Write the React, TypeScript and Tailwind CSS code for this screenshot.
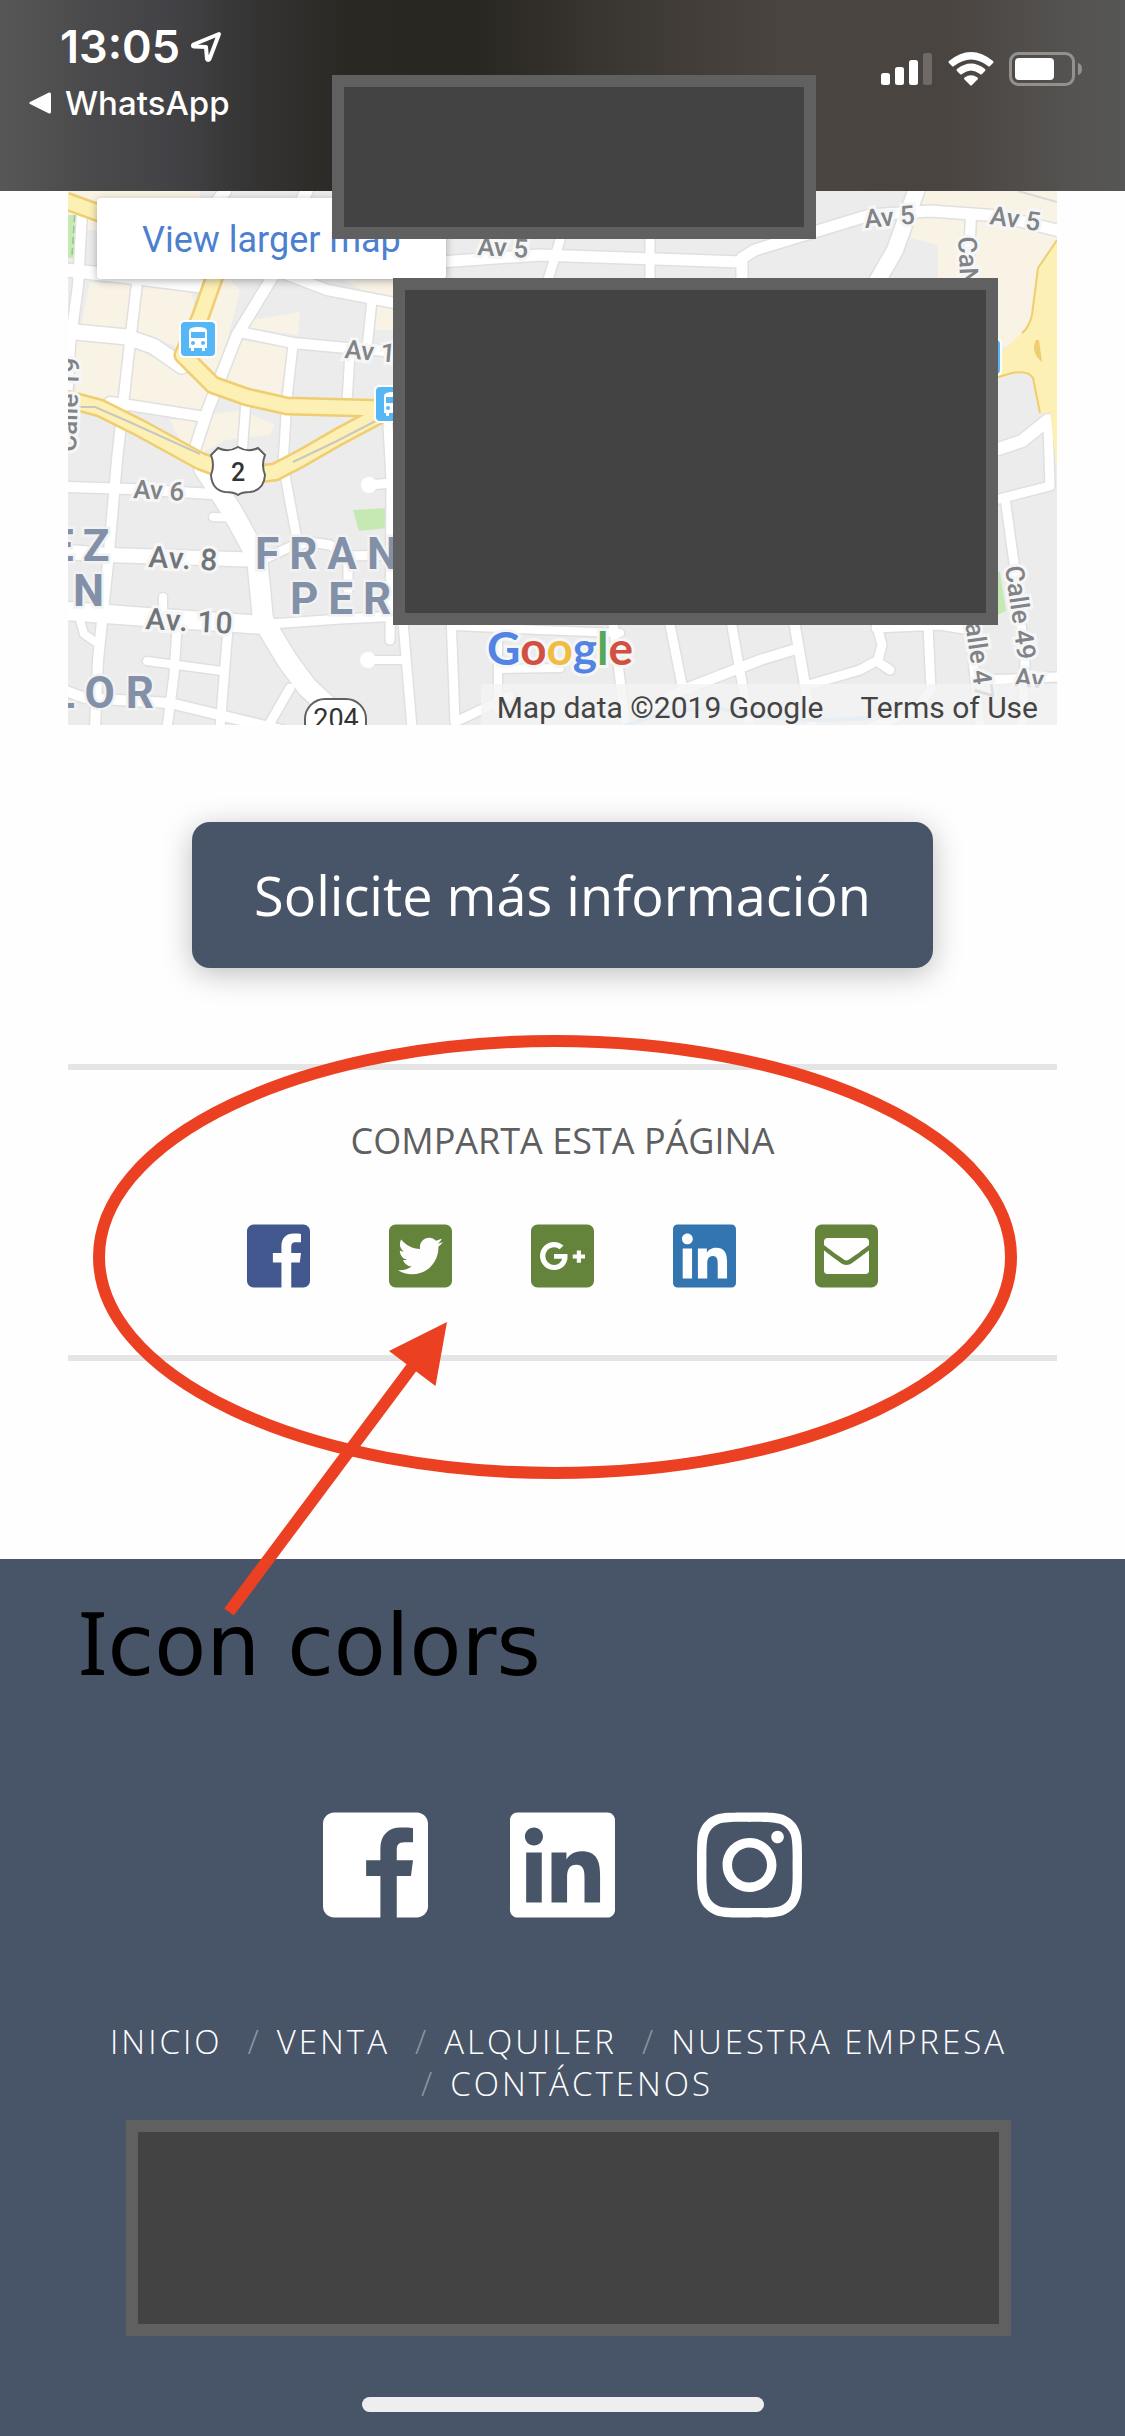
import React from "react";
import {
  FaTwitterSquare,
  FaGooglePlusSquare,
  FaLinkedin,
  FaEnvelopeSquare,
  FaInstagram,
} from "react-icons/fa";

function FacebookSquare({ className }: { className: string }) {
  return (
    <svg viewBox="0 0 448 512" className={className} fill="currentColor" aria-hidden="true">
      <path d="M448 80v352c0 26.5-21.5 48-48 48h-85.3V302.8h60.6l8.7-67.6h-69.3V192c0-19.6 5.4-32.9 33.5-32.9H384V98.7c-6.2-.8-27.4-2.7-52.2-2.7-51.6 0-87 31.5-87 89.4v49.9H184v67.6h60.9V480H48c-26.5 0-48-21.5-48-48V80c0-26.5 21.5-48 48-48h352c26.5 0 48 21.5 48 48z" />
    </svg>
  );
}

function StatusBar() {
  return (
    <header className="flex h-[191px] items-start justify-between bg-[linear-gradient(90deg,#575757_0%,#4a4a4c_8%,#434246_15%,#343332_23%,#292823_31%,#292722_42%,#3b3733_55%,#4b4541_70%,#4a4440_84%,#555452_96%,#575656_100%)] font-['Inter'] text-white">
      <div className="pt-[20px] pl-[29px]">
        <div className="flex items-center gap-[10px] pl-[31px]">
          <span className="text-[45px] leading-[54px] font-semibold">13:05</span>
          <svg width="32" height="32" viewBox="0 0 32 32" fill="none" aria-label="Ubicación">
            <path d="M29 3 L3.500 13.500 Q2 15 4 15.500 L16 16 L17 28 Q18 30 19.500 28 Z" stroke="white" strokeWidth="4" strokeLinejoin="round" />
          </svg>
        </div>
        <button className="mt-[9px] flex items-center gap-[14px] text-[33px] leading-[40px] font-medium">
          <svg width="22" height="22" viewBox="0 0 22 22" fill="white" aria-hidden="true">
            <path d="M20 0.500 Q22 0 22 2 V20 Q22 22 20 21.500 L1 12 Q-0.500 11 1 10 Z" />
          </svg>
          WhatsApp
        </button>
      </div>
      <div className="flex items-center gap-[15px] pt-[52px] pr-[42px]">
        <svg width="52" height="34" viewBox="0 0 52 34" fill="white" aria-label="Señal">
          <rect x="0" y="21" width="9" height="12" rx="2.500" />
          <rect x="14" y="15" width="9" height="18" rx="2.500" />
          <rect x="28" y="8" width="9" height="25" rx="2.500" />
          <rect x="42" y="1" width="9" height="32" rx="2.500" fill="#6f6967" />
        </svg>
        <svg width="46" height="34" viewBox="0 0 46 34" fill="white" aria-label="Wi-Fi">
          <path d="M1 9 Q23 -9 45 9 Q46 10 45 11 L42 14 Q41 15 40 14 Q23 1 6 14 Q5 15 4 14 L1 11 Q0 10 1 9Z" />
          <path d="M9 17 Q23 6 37 17 Q38 18 37 19 L34 22 Q33 23 32 22 Q23 15 14 22 Q13 23 12 22 L9 19 Q8 18 9 17Z" />
          <path d="M16.500 25.500 Q23 21 29.500 25.500 Q30.500 26.500 29.500 27.500 L24 33 Q23 34 22 33 L16.500 27.500 Q15.500 26.500 16.500 25.500Z" />
        </svg>
        <svg width="74" height="34" viewBox="0 0 74 34" aria-label="Batería">
          <rect x="1.500" y="1.500" width="63" height="31" rx="8" fill="none" stroke="#93908e" strokeWidth="3" />
          <rect x="6" y="6" width="39" height="22" rx="4" fill="white" />
          <path d="M69 11 Q73 12 73 17 Q73 22 69 23Z" fill="#93908e" />
        </svg>
      </div>
    </header>
  );
}

const streets: { d: string; w: number }[] = [
  { d: "M82 212 L78 285 L70 345 L66 420", w: 10 },
  { d: "M138 275 L130 342 L123 405 L117 460 L108 563 L98 660 L95 728", w: 10 },
  { d: "M66 270 L130 277 L202 286", w: 13 },
  { d: "M66 331 L127 337 L153 346 L182 366", w: 15 },
  { d: "M273 276 L237 335 L207 412 L193 455", w: 11 },
  { d: "M240 332 L293 343 L347 348 L400 352", w: 10 },
  { d: "M293 345 L287 398 L283 465", w: 9 },
  { d: "M246 400 L242 455", w: 9 },
  { d: "M372 300 L367 348", w: 9 },
  { d: "M350 352 L347 402", w: 9 },
  { d: "M280 272 L327 290 L400 304", w: 10 },
  { d: "M110 402 L205 417", w: 10 },
  { d: "M388 425 L391 480", w: 9 },
  { d: "M225 191 L215 205 M308 188 L300 205", w: 12 },
  { d: "M66 487 L130 489 L212 494", w: 10 },
  { d: "M204 468 L233 513 L257 557 L263 620 L287 660 L307 687 L335 713", w: 20 },
  { d: "M213 517 L240 518", w: 8 },
  { d: "M66 552 L108 555 L260 560", w: 14 },
  { d: "M262 560 L290 547 L310 542 L330 545 L345 556 L400 555 M348 556 V590", w: 9 },
  { d: "M66 611 L160 618 L265 625", w: 18 },
  { d: "M270 624 L340 619 L400 616", w: 9 },
  { d: "M163 597 V615", w: 8 },
  { d: "M285 475 L298 545", w: 9 },
  { d: "M80 620 L84 634 L100 645", w: 8 },
  { d: "M177 628 L174 675 L167 728 M228 628 L220 728", w: 9 },
  { d: "M147 661 L222 671", w: 8 },
  { d: "M66 691 L85 698 L170 703 L290 732", w: 10 },
  { d: "M290 688 L266 730", w: 9 },
  { d: "M370 485 L391 483 L390 640 M402 610 L412 728", w: 9 },
  { d: "M370 660 H405", w: 8 },
  { d: "M451 615 L455 722 L510 696", w: 9 },
  { d: "M455 626 L540 630 L620 633 M498 630 V710 M500 669 L560 668", w: 8 },
  { d: "M612 615 L626 728 M668 615 L683 690 M730 615 L750 728", w: 9 },
  { d: "M640 712 L683 690 L760 660 L796 649", w: 10 },
  { d: "M793 615 L805 685 L812 728", w: 10 },
  { d: "M874 615 L882 645 L878 660 L860 670 L805 686 M878 662 L890 670", w: 9 },
  { d: "M876 628 L940 625 L970 630 L980 728 M928 626 L931 690 L915 710 L870 728", w: 9 },
  { d: "M995 500 L1050 486 L1048 425 M1005 498 L1015 570 L1025 660 L1022 728", w: 9 },
  { d: "M985 680 L1060 677", w: 9 },
  { d: "M440 262 L540 255 L742 262 M742 290 V258 L755 250 L870 215 L930 211 L1000 216 L1060 231", w: 11 },
  { d: "M918 186 L895 250 L875 285", w: 16 },
  { d: "M971 214 L968 285", w: 10 },
  { d: "M995 450 L1022 441 L1048 420", w: 12 },
  { d: "M560 240 L545 290 M650 240 V290", w: 9 },
];

const yellowRoads = [
  "M66 201 L110 217",
  "M217 270 L200 318 L183 355 L213 385 L247 397 L287 406 L400 409",
  "M66 399 L100 408 L140 428 L200 461 L240 476 L275 472 L300 459 L340 436 L400 404",
];

const halo = "fill-[#808387] stroke-[#f6f6f6] stroke-[6px] [paint-order:stroke] font-medium text-[26px]";
const district = "fill-[#8290a8] stroke-[#f2f2f2] stroke-[5px] [paint-order:stroke] font-bold text-[44px] tracking-[9px]";

function BusStop({ x, y }: { x: number; y: number }) {
  return (
    <g transform={`translate(${x} ${y})`}>
      <rect x="-2" y="-2" width="38" height="38" rx="5" fill="white" />
      <rect width="34" height="34" rx="4" fill="#56b7f6" />
      <path d="M8 26 V9 Q8 5 17 5 Q26 5 26 9 V26 H24 V29 H21 V26 H13 V29 H10 V26Z" fill="white" />
      <rect x="10" y="10" width="14" height="6" fill="#56b7f6" />
      <circle cx="12" cy="21" r="2" fill="#56b7f6" />
      <circle cx="22" cy="21" r="2" fill="#56b7f6" />
    </g>
  );
}

function MapDrawing() {
  return (
    <svg viewBox="68 191 989 534" className="block w-full font-['Roboto']" role="img" aria-label="Mapa">
      <rect x="68" y="191" width="989" height="534" fill="#ececec" />
      <g fill="#f9f3e6">
        <path d="M68 191 H200 V230 H68Z M90 283 H190 L195 310 L185 350 L160 340 L80 330Z M76 340 L125 345 L180 368 L212 392 L200 412 L76 400Z M205 280 H230 L240 290 L225 350 L210 380 L193 360Z M253 320 L300 312 L298 335 L250 328Z M240 340 L288 348 L280 397 L220 385Z M170 420 L240 410 L275 425 L270 435 L225 440 L190 460Z M345 280 H395 V330 H375 L378 300Z" />
        <path d="M925 191 H1057 V245 L1037 268 L1030 335 L998 350 L938 278 V245 L910 238Z" />
      </g>
      <g fill="#c6e9b4">
        <path d="M68 215 H77 L74 258 H68Z" />
        <path d="M353 510 L387 508 L388 528 L359 531Z" />
        <path d="M995 572 H1000 L1006 611 L995 616Z" />
      </g>
      <path d="M75 215 L72 258" stroke="#8bcf87" strokeWidth="2" strokeDasharray="7 4" />
      <g fill="none" stroke="#e0e0e0" strokeLinejoin="round" strokeLinecap="round">
        {streets.map((s) => (
          <path key={s.d} d={s.d} strokeWidth={s.w + 3} />
        ))}
      </g>
      <g fill="none" stroke="#ffffff" strokeLinejoin="round" strokeLinecap="round">
        {streets.map((s) => (
          <path key={s.d} d={s.d} strokeWidth={s.w} />
        ))}
      </g>
      <circle cx="369" cy="485" r="8" fill="white" />
      <circle cx="368" cy="660" r="8" fill="white" />
      <g fill="none" strokeLinejoin="round">
        {yellowRoads.map((d) => (
          <path key={d} d={d} stroke="#efcd70" strokeWidth="19" />
        ))}
        {yellowRoads.map((d) => (
          <path key={d} d={d} stroke="#fcf0b5" strokeWidth="14" />
        ))}
        <path d="M66 407 L95 407 L125 420 L200 454 M293 462 L335 442 L395 411" stroke="#c9c7bf" strokeWidth="2" />
      </g>
      <path d="M1057 240 L1038 268 L1032 315 L1022 333 L1003 350 L995 380 L1020 372 L1032 376 L1041 414 L1050 412 L1057 470Z" fill="#fcf0b5" />
      <path d="M1057 240 L1038 268 L1032 315 Q1029 328 1022 333 M995 378 L1012 373 Q1028 370 1033 378 L1040 413" fill="none" stroke="#efcd70" strokeWidth="2" />
      <path d="M1036 340 L1039 340 L1042 362 Q1030 352 1036 340Z" fill="#efcd70" />
      <path d="M1018 191 L1057 202" stroke="#dadada" strokeWidth="2" />
      <path d="M620 728 Q690 700 740 712 T870 718" fill="none" stroke="#b5d5f4" strokeWidth="4" />

      <BusStop x={181} y={322} />
      <BusStop x={376} y={387} />
      <BusStop x={966} y={340} />

      <g className={halo}>
        <text x="477" y="255" transform="rotate(3 477 255)">Av 5</text>
        <text x="865" y="228" transform="rotate(-5 865 228)">Av 5</text>
        <text x="989" y="224" transform="rotate(8 989 224)">Av 5</text>
        <text x="344" y="358" transform="rotate(5 344 358)">Av 1</text>
        <text x="133" y="498" transform="rotate(3 133 498)">Av 6</text>
        <text x="958" y="237" transform="rotate(87 958 237)">CaN</text>
        <text x="1005" y="567" transform="rotate(82 1005 567)">Calle 49</text>
        <text x="963" y="607" transform="rotate(82 963 607)">Calle 47</text>
        <text x="76" y="452" transform="rotate(-88 76 452)">Calle 19</text>
        <text x="1014" y="686" transform="rotate(5 1014 686)">Av</text>
      </g>
      <g className="fill-[#70757a] stroke-[#f6f6f6] stroke-[6px] text-[30px] font-medium tracking-[1px] [paint-order:stroke]">
        <text x="148" y="567" transform="rotate(3 148 567)">Av. 8</text>
        <text x="145" y="629" transform="rotate(3 145 629)">Av. 10</text>
      </g>
      <g className={district}>
        <text x="49" y="561">EZ</text>
        <text x="73" y="606">N</text>
        <text x="51" y="708" className="tracking-[11px]">LOR</text>
        <text x="255" y="569" className="tracking-[10px]">FRAN</text>
        <text x="290" y="614" className="tracking-[10px]">PER</text>
      </g>
      <path d="M218 448 Q228 453 238 447 Q248 453 258 448 L265 455 Q261 465 265 475 Q264 490 250 492 Q242 492 238 495 Q234 492 225 492 Q212 490 211 475 Q215 465 211 455Z" fill="white" stroke="#606060" strokeWidth="2" />
      <text x="238" y="481" textAnchor="middle" className="fill-[#333] text-[25px] font-medium">2</text>
      <rect x="305" y="699" width="61" height="44" rx="20" fill="white" stroke="#606060" strokeWidth="2" />
      <text x="336" y="728" textAnchor="middle" className="fill-[#333] text-[27px]">204</text>
      <text x="487" y="665" className="stroke-[#f6f6f6] stroke-[6px] font-['Lato'] text-[46px] font-bold [paint-order:stroke]">
        <tspan fill="#5383e4">G</tspan>
        <tspan fill="#d2503f">o</tspan>
        <tspan fill="#eebd42">o</tspan>
        <tspan fill="#5383e4">g</tspan>
        <tspan fill="#58a65c">l</tspan>
        <tspan fill="#d2503f">e</tspan>
      </text>
    </svg>
  );
}

function MapEmbed() {
  return (
    <section className="relative mx-[68px] overflow-hidden font-['Roboto']">
      <MapDrawing />
      <a
        href="#map"
        className="absolute top-[7px] left-[29px] flex h-[81px] w-[349px] items-center rounded-[4px] bg-white pt-[2px] pl-[45px] text-[36px] text-[#4d7fd0] shadow-[0_2px_8px_rgba(0,0,0,0.3)]"
      >
        View larger map
      </a>
      <div className="absolute right-0 bottom-0 flex h-[41px] items-center gap-[37px] bg-[#f4f4f4]/80 pt-[6px] pr-[19px] pl-[16px] text-[30px] leading-[33px] text-[#444]">
        <span>Map data ©2019 Google</span>
        <a href="#terms">Terms of Use</a>
      </div>
    </section>
  );
}

const shareIcon = "h-[72px] w-[63px]";
const shareLinks = [
  { label: "Facebook", tone: "text-[#43578f]", icon: <FacebookSquare className={shareIcon} /> },
  { label: "Twitter", tone: "text-[#64843b]", icon: <FaTwitterSquare className={shareIcon} /> },
  { label: "Google Plus", tone: "text-[#64843b]", icon: <FaGooglePlusSquare className={shareIcon} /> },
  { label: "LinkedIn", tone: "text-[#3375b0]", icon: <FaLinkedin className={shareIcon} /> },
  { label: "Correo", tone: "text-[#64843b]", icon: <FaEnvelopeSquare className={shareIcon} /> },
];

function ShareSection() {
  return (
    <section className="mx-[68px] mt-[96px] h-[297px] border-y-[6px] border-[#e5e5e5] pt-[47px]">
      <h2 className="text-center text-[36px] leading-[48px] text-[#5f5f5f]">COMPARTA ESTA PÁGINA</h2>
      <ul className="mt-[55px] flex justify-center gap-[79px]">
        {shareLinks.map((s) => (
          <li key={s.label}>
            <a href="#share" aria-label={s.label} className={`block ${s.tone}`}>
              {s.icon}
            </a>
          </li>
        ))}
      </ul>
    </section>
  );
}

const footerLinks = ["INICIO", "VENTA", "ALQUILER", "NUESTRA EMPRESA", "CONTÁCTENOS"];

function Footer() {
  return (
    <footer className="mt-[198px] bg-[#485467] pt-[246px] pb-[24px] text-white">
      <div className="flex justify-center gap-[82px]">
        <a href="#facebook" aria-label="Facebook"><FacebookSquare className="h-[120px] w-[105px]" /></a>
        <a href="#linkedin" aria-label="LinkedIn"><FaLinkedin className="h-[120px] w-[105px]" /></a>
        <a href="#instagram" aria-label="Instagram"><FaInstagram className="h-[120px] w-[105px]" /></a>
      </div>
      <nav className="mx-[68px] mt-[96px]">
        <ul className="flex flex-wrap justify-center text-[33px] leading-[42px] font-light tracking-[3px]">
          {footerLinks.map((l, i) => (
            <li key={l} className="pr-[8px]">
              {i > 0 && <span className="pr-[15px] pl-[17px] text-[#8c95a3]">/</span>}
              <a href="#nav">{l}</a>
            </li>
          ))}
        </ul>
      </nav>
      <div className="mt-[15px] mr-[114px] ml-[126px] h-[216px] border-[12px] border-[#606060] bg-[#434343]" />
      <div className="mx-auto mt-[61px] h-[15px] w-[402px] rounded-full bg-[#eeeeef]" />
    </footer>
  );
}

export default function App() {
  return (
    <div className="relative min-h-screen overflow-hidden bg-[#fefefe] font-['Open_Sans',sans-serif]">
      <StatusBar />
      <MapEmbed />
      <div className="mt-[97px] flex justify-center">
        <button className="rounded-[18px] bg-[#485467] px-[62px] py-[36px] text-[54px] leading-[74px] text-white shadow-[0_6px_30px_rgba(0,0,0,0.25)]">
          Solicite más información
        </button>
      </div>
      <ShareSection />
      <Footer />

      <div className="absolute top-[75px] left-[332px] h-[164px] w-[484px] border-[12px] border-[#606060] bg-[#434343]" />
      <div className="absolute top-[278px] left-[393px] h-[347px] w-[605px] border-[12px] border-[#606060] bg-[#434343]" />
      <svg className="pointer-events-none absolute top-[1030px] left-[80px]" width="950" height="600" viewBox="80 1030 950 600" aria-hidden="true">
        <ellipse cx="555" cy="1257" rx="456" ry="216" fill="none" stroke="#ec4023" strokeWidth="12" />
        <path d="M229 1612 L412 1367" stroke="#ec4023" strokeWidth="12" />
        <path d="M447 1322 L389 1351 L435.500 1386Z" fill="#ec4023" />
      </svg>
      <p className="absolute top-[1591px] left-[78px] font-['DejaVu_Sans'] text-[85px] leading-[100px] whitespace-nowrap text-black">
        <span className="font-['Noto_Sans'] text-[87px]">I</span>con colors
      </p>
    </div>
  );
}
